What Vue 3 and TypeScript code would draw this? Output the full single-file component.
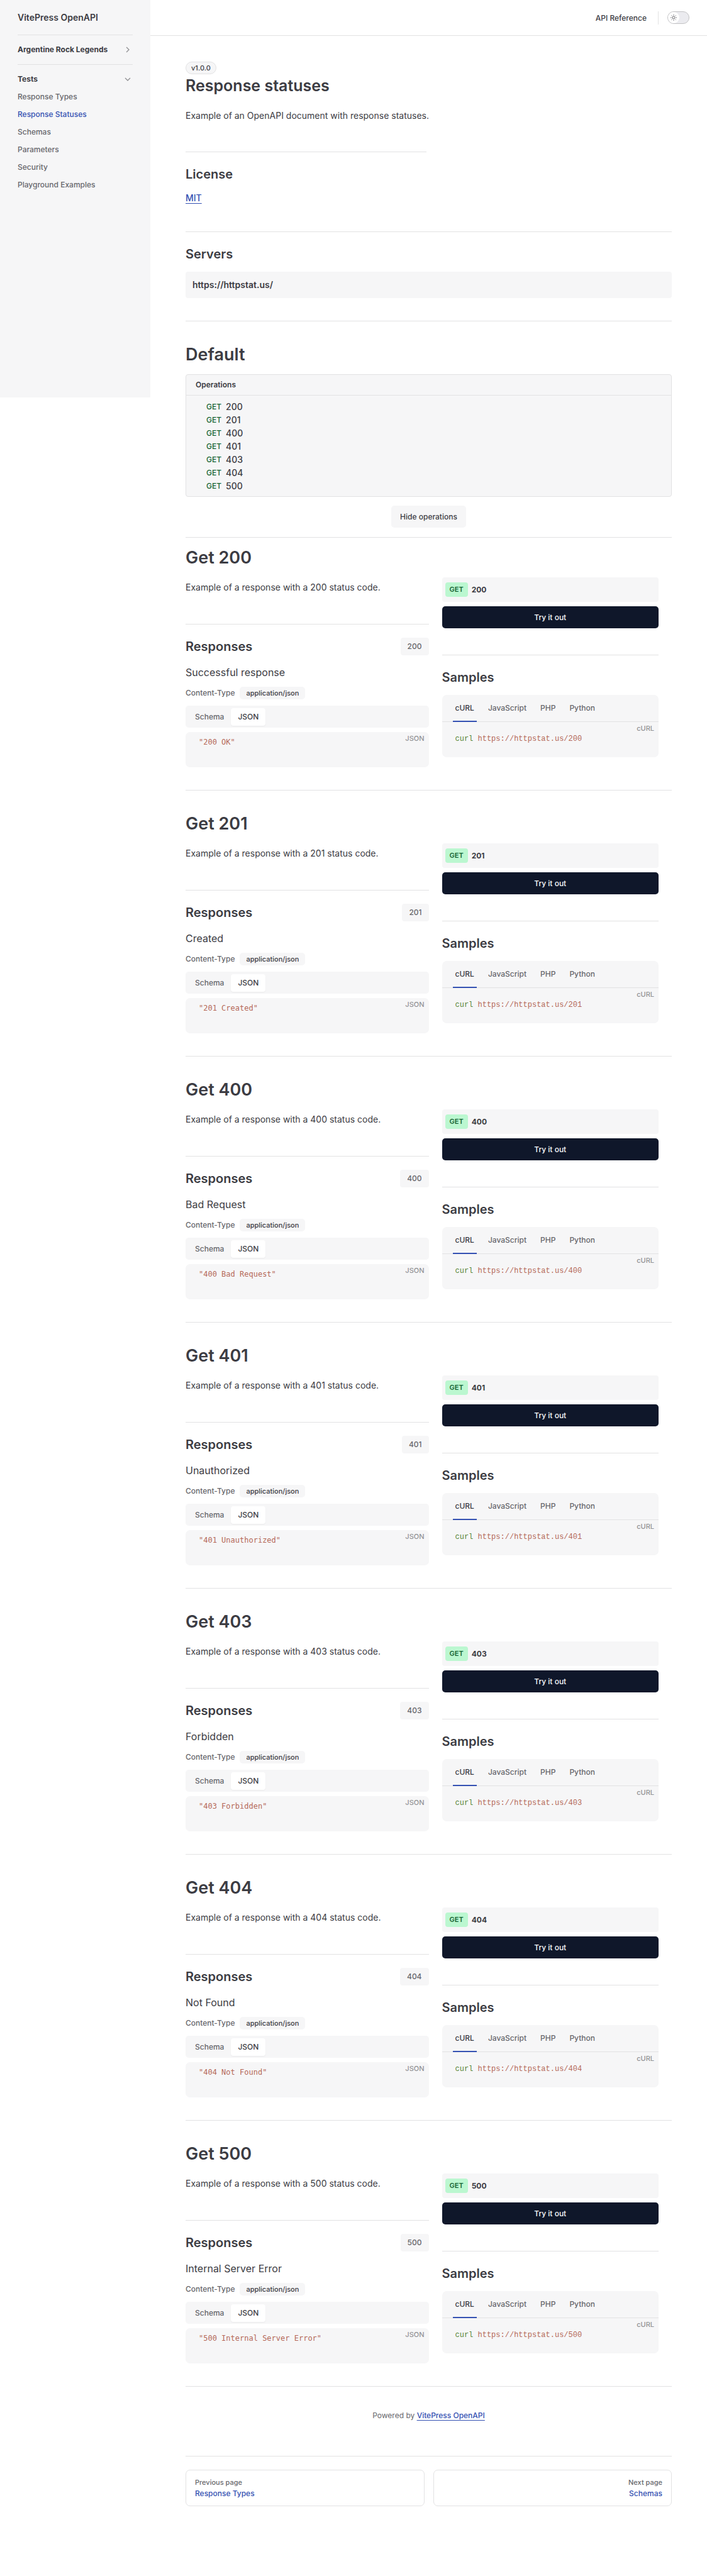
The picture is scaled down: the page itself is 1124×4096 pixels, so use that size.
<script setup lang="ts">
import { ref } from 'vue'

interface Operation {
  code: string
  description: string
  body: string
}

const navItems: string[] = [
  'Response Types',
  'Response Statuses',
  'Schemas',
  'Parameters',
  'Security',
  'Playground Examples',
]
const activeItem = 'Response Statuses'

const operations: Operation[] = [
  { code: '200', description: 'Successful response', body: '200 OK' },
  { code: '201', description: 'Created', body: '201 Created' },
  { code: '400', description: 'Bad Request', body: '400 Bad Request' },
  { code: '401', description: 'Unauthorized', body: '401 Unauthorized' },
  { code: '403', description: 'Forbidden', body: '403 Forbidden' },
  { code: '404', description: 'Not Found', body: '404 Not Found' },
  { code: '500', description: 'Internal Server Error', body: '500 Internal Server Error' },
]

const languages: string[] = ['cURL', 'JavaScript', 'PHP', 'Python']
const language = ref('cURL')
const dark = ref(false)
</script>

<template>
  <div class="layout">
    <aside class="sidebar">
      <a class="site-title" href="#">VitePress OpenAPI</a>
      <nav aria-label="Sidebar">
        <div class="group group-closed">
          <button class="group-head" type="button" aria-expanded="false">
            <span>Argentine Rock Legends</span>
            <svg class="chevron" viewBox="0 0 24 24" aria-hidden="true"><path d="m9 18 6-6-6-6" /></svg>
          </button>
        </div>
        <div class="group">
          <button class="group-head" type="button" aria-expanded="true">
            <span>Tests</span>
            <svg class="chevron" viewBox="0 0 24 24" aria-hidden="true"><path d="m6 9 6 6 6-6" /></svg>
          </button>
          <ul class="nav-list">
            <li v-for="item in navItems" :key="item">
              <a href="#" :class="{ active: item === activeItem }">{{ item }}</a>
            </li>
          </ul>
        </div>
      </nav>
    </aside>

    <div class="page">
      <header class="topbar">
        <a class="top-link" href="#">API Reference</a>
        <button class="switch" type="button" role="switch" :aria-checked="dark" aria-label="Toggle dark theme" @click="dark = !dark">
          <span class="knob">
            <svg viewBox="0 0 24 24" aria-hidden="true">
              <circle cx="12" cy="12" r="4" />
              <path d="M12 2v3M12 19v3M4.9 4.9l2 2M17.1 17.1l2 2M2 12h3M19 12h3M6.9 17.1l-2 2M19.1 4.9l-2 2" />
            </svg>
          </span>
        </button>
      </header>

      <main class="content">
        <section class="intro">
          <span class="version">v1.0.0</span>
          <h1 class="doc-title">Response statuses</h1>
          <p class="lead">Example of an OpenAPI document with response statuses.</p>
        </section>

        <section class="license">
          <h2>License</h2>
          <a class="link" href="#">MIT</a>
        </section>

        <section class="servers">
          <h2>Servers</h2>
          <div class="server">https://httpstat.us/</div>
        </section>

        <section class="overview">
          <h1>Default</h1>
          <div class="ops">
            <div class="ops-head">Operations</div>
            <ul class="ops-list">
              <li v-for="op in operations" :key="op.code">
                <a href="#"><span class="method">GET</span>{{ op.code }}</a>
              </li>
            </ul>
          </div>
          <button class="hide" type="button">Hide operations</button>
        </section>

        <section v-for="op in operations" :key="op.code" class="operation">
          <h1>Get {{ op.code }}</h1>
          <div class="columns">
            <div class="left">
              <p class="lead">Example of a response with a {{ op.code }} status code.</p>
              <div class="responses">
                <div class="responses-head">
                  <h2>Responses</h2>
                  <button class="status" type="button">{{ op.code }}</button>
                </div>
                <p class="summary">{{ op.description }}</p>
                <div class="type-row">
                  <span>Content-Type</span>
                  <span class="chip">application/json</span>
                </div>
                <div class="view-tabs" role="tablist">
                  <button type="button" role="tab" aria-selected="false">Schema</button>
                  <button type="button" role="tab" aria-selected="true" class="on">JSON</button>
                </div>
                <div class="code-box">
                  <code class="string">"{{ op.body }}"</code>
                  <span class="lang">JSON</span>
                </div>
              </div>
            </div>

            <div class="right">
              <div class="endpoint">
                <span class="pill">GET</span>
                <span class="path">{{ op.code }}</span>
              </div>
              <button class="try" type="button">Try it out</button>
              <div class="samples">
                <h2>Samples</h2>
                <div class="sample-box">
                  <div class="lang-tabs" role="tablist">
                    <button
                      v-for="name in languages"
                      :key="name"
                      type="button"
                      role="tab"
                      :aria-selected="name === language"
                      :class="{ on: name === language }"
                      @click="language = name"
                    >{{ name }}</button>
                  </div>
                  <div class="sample-code">
                    <code><span class="cmd">curl</span> <span class="string">https://httpstat.us/{{ op.code }}</span></code>
                    <span class="lang">cURL</span>
                  </div>
                </div>
              </div>
            </div>
          </div>
        </section>

        <p class="powered">Powered by <a class="link" href="#">VitePress OpenAPI</a></p>

        <footer class="pager">
          <a href="#"><span>Previous page</span><strong>Response Types</strong></a>
          <a href="#" class="next"><span>Next page</span><strong>Schemas</strong></a>
        </footer>
      </main>
    </div>
  </div>
</template>

<style>
body {
  background: #ffffff;
}
</style>

<style scoped>
.layout {
  --text: #3c3c43;
  --text-2: #67676c;
  --text-3: #929295;
  --line: #e2e2e3;
  --soft: #f6f6f7;
  --brand: #3451b2;
  display: flex;
  align-items: flex-start;
  color: var(--text);
  font-family: Inter, "Liberation Sans", sans-serif;
  font-size: 14px;
  line-height: 24px;
}

.layout *,
.layout *::before {
  box-sizing: border-box;
}

button {
  margin: 0;
  padding: 0;
  border: 0;
  background: none;
  color: inherit;
  font: inherit;
  cursor: pointer;
}

a {
  color: inherit;
  text-decoration: none;
}

h1,
h2,
p,
ul {
  margin: 0;
  padding: 0;
}

ul {
  list-style: none;
}

h1 {
  font-size: 27px;
  font-weight: 600;
  line-height: 36px;
}

h1.doc-title {
  font-size: 25px;
}

h2 {
  font-size: 20px;
  font-weight: 600;
  line-height: 28px;
}

/* Sidebar */
.sidebar {
  flex: none;
  width: 239px;
  min-height: 632px;
  padding: 0 28px;
  background: var(--soft);
}

.site-title {
  display: block;
  height: 56px;
  border-bottom: 1px solid var(--line);
  font-weight: 600;
  line-height: 56px;
}

.group {
  padding-top: 9px;
}

.group-closed {
  padding-bottom: 9px;
  border-bottom: 1px solid var(--line);
}

.group-head {
  display: flex;
  align-items: center;
  justify-content: space-between;
  width: 100%;
  height: 28px;
  font-size: 12px;
  font-weight: 700;
}

.chevron {
  width: 16px;
  height: 16px;
  fill: none;
  stroke: var(--text-3);
  stroke-width: 2;
}

.nav-list a {
  display: block;
  color: var(--text-2);
  font-size: 12px;
  font-weight: 500;
  line-height: 28px;
}

.nav-list a.active {
  color: var(--brand);
}

/* Top bar */
.page {
  flex: 1;
  min-width: 0;
}

.topbar {
  display: flex;
  align-items: center;
  justify-content: flex-end;
  height: 57px;
  padding-right: 28px;
  border-bottom: 1px solid var(--line);
  font-size: 12px;
  font-weight: 500;
}

.top-link {
  padding-right: 18px;
  border-right: 1px solid var(--line);
  line-height: 21px;
}

.switch {
  width: 35px;
  height: 20px;
  margin-left: 14px;
  border: 1px solid #c2c2c4;
  border-radius: 10px;
  background: #ebebef;
}

.knob {
  display: flex;
  align-items: center;
  justify-content: center;
  width: 18px;
  height: 18px;
  border-radius: 9px;
  background: #ffffff;
}

.knob svg {
  width: 12px;
  height: 12px;
  fill: none;
  stroke: var(--text-2);
  stroke-width: 2;
}

/* Content */
.content {
  padding: 41px 56px 111px;
}

.intro {
  width: calc(50% - 4px);
  padding-bottom: 45px;
  border-bottom: 1px solid var(--line);
}

.version {
  display: block;
  width: fit-content;
  padding: 0 8px;
  border: 1px solid var(--line);
  border-radius: 10px;
  background: var(--soft);
  font-size: 11px;
  font-weight: 500;
  line-height: 18px;
}

.intro .lead {
  margin-top: 18px;
  white-space: nowrap;
}

.link {
  color: var(--brand);
  font-weight: 500;
  text-decoration: underline;
  text-underline-offset: 3px;
}

.license {
  padding: 21px 0 41px;
}

.license .link {
  display: block;
  width: fit-content;
  margin-top: 12px;
}

.servers {
  padding: 21px 0 36px;
  border-top: 1px solid var(--line);
}

.server {
  margin-top: 14px;
  padding: 0 11px;
  border-radius: 4px;
  background: var(--soft);
  font-weight: 600;
  line-height: 42px;
}

.overview {
  padding: 35px 0 15px;
  border-top: 1px solid var(--line);
}

.ops {
  margin-top: 13px;
  border: 1px solid var(--line);
  border-radius: 4px;
  background: var(--soft);
}

.ops-head {
  padding: 0 15px;
  border-bottom: 1px solid var(--line);
  font-size: 12px;
  font-weight: 600;
  line-height: 32px;
}

.ops-list {
  padding: 7px 32px 6px;
}

.ops-list a {
  display: flex;
  align-items: center;
  gap: 7px;
  height: 21px;
  font-weight: 500;
}

.method {
  color: #166534;
  font-size: 12px;
}

.hide {
  display: block;
  height: 35px;
  margin: 14px auto 0;
  padding: 0 14px;
  border-radius: 5px;
  background: var(--soft);
  font-size: 12px;
  font-weight: 500;
}

/* Operation */
.operation {
  padding: 35px 0 36px;
  border-top: 1px solid var(--line);
}

.overview + .operation {
  padding-top: 14px;
}

.columns {
  display: grid;
  grid-template-columns: 1fr 1fr;
  margin-top: 13px;
}

.left .lead {
  margin-top: 4px;
}

.responses {
  margin-top: 46px;
  border-top: 1px solid var(--line);
  padding-top: 21px;
}

.responses-head {
  display: flex;
  align-items: center;
  justify-content: space-between;
}

.status {
  padding: 0 11px;
  border-radius: 4px;
  background: var(--soft);
  color: var(--text-2);
  font-size: 12px;
  font-weight: 500;
  line-height: 28px;
}

.summary {
  margin-top: 14px;
  font-size: 16px;
  line-height: 26px;
}

.type-row {
  display: flex;
  align-items: center;
  gap: 8px;
  margin-top: 10px;
  color: var(--text-2);
  font-size: 12px;
  font-weight: 500;
  line-height: 20px;
}

.chip {
  padding: 0 10px;
  border-radius: 5px;
  background: var(--soft);
  color: var(--text);
  font-size: 11px;
}

.view-tabs {
  display: flex;
  align-items: center;
  height: 35px;
  margin-top: 10px;
  padding: 0 4px;
  border-radius: 5px;
  background: var(--soft);
  color: var(--text-2);
  font-size: 12px;
  font-weight: 500;
}

.view-tabs button {
  height: 28px;
  padding: 0 11px;
  border-radius: 4px;
}

.view-tabs .on {
  background: #ffffff;
  color: var(--text);
  box-shadow: 0 1px 2px rgba(0, 0, 0, 0.05);
}

code {
  font-family: "DejaVu Sans Mono", monospace;
  font-size: 12px;
}

.code-box,
.sample-code {
  display: flex;
  align-items: flex-start;
  justify-content: space-between;
}

.code-box {
  height: 56px;
  margin-top: 7px;
  padding: 0 7px 0 21px;
  border-radius: 7px;
  background: var(--soft);
}

.code-box code {
  line-height: 33px;
}

.string {
  color: #b56959;
}

.cmd {
  color: #59873a;
}

.lang {
  color: var(--text-3);
  font-size: 11px;
  font-weight: 500;
  line-height: 21px;
}

.right {
  padding: 0 21px;
}

.endpoint {
  display: flex;
  align-items: center;
  gap: 6px;
  height: 39px;
  padding: 0 5px;
  border-radius: 4px;
  background: var(--soft);
  font-size: 12px;
  font-weight: 700;
}

.pill {
  padding: 0 7px;
  border-radius: 4px;
  background: #bbf7d0;
  color: #166534;
  font-size: 11px;
  font-weight: 600;
  line-height: 23px;
}

.try {
  display: block;
  width: 100%;
  height: 35px;
  margin-top: 7px;
  border-radius: 5px;
  background: #0f172a;
  color: #f8fafc;
  font-size: 12px;
  font-weight: 500;
}

.samples {
  margin-top: 42px;
  padding-top: 21px;
  border-top: 1px solid var(--line);
}

.sample-box {
  margin-top: 14px;
  border-radius: 7px;
  background: var(--soft);
}

.lang-tabs {
  display: flex;
  padding: 0 17px;
  border-bottom: 1px solid var(--line);
  color: var(--text-2);
  font-size: 12px;
  font-weight: 500;
}

.lang-tabs button {
  height: 43px;
  margin-bottom: -1px;
  border-bottom: 2px solid transparent;
  padding: 0 4px;
}

.lang-tabs button + button {
  margin-left: 14px;
}

.lang-tabs .on {
  border-color: var(--brand);
  color: var(--text);
}

.sample-code {
  height: 56px;
  padding: 0 7px 0 21px;
}

.sample-code code {
  font-family: "Liberation Mono", monospace;
  line-height: 54px;
}

/* Footer */
.powered {
  padding: 36px 0 54px;
  border-top: 1px solid var(--line);
  border-bottom: 1px solid var(--line);
  color: var(--text-2);
  font-size: 12px;
  line-height: 20px;
  text-align: center;
}

.pager {
  display: grid;
  grid-template-columns: 1fr 1fr;
  gap: 14px;
  padding-top: 21px;
}

.pager a {
  padding: 10px 14px;
  border: 1px solid var(--line);
  border-radius: 7px;
}

.pager span,
.pager strong {
  display: block;
  font-weight: 500;
  line-height: 18px;
}

.pager span {
  color: var(--text-2);
  font-size: 11px;
}

.pager strong {
  color: var(--brand);
  font-size: 12px;
}

.pager .next {
  text-align: right;
}
</style>
